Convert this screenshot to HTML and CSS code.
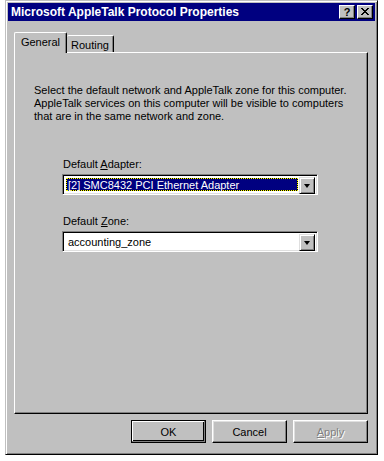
FILE: index.html
```html
<!DOCTYPE html>
<html>
<head>
<meta charset="utf-8">
<title>Microsoft AppleTalk Protocol Properties</title>
<link rel="stylesheet" href="styles.css">
</head>
<body>
<div class="window">
  <div class="titlebar">
    <span class="title">Microsoft AppleTalk Protocol Properties</span>
    <div class="tb-buttons">
      <div class="tb-btn help">?</div>
      <div class="tb-btn close">
        <svg width="8" height="7" viewBox="0 0 8 7"><path d="M0 0h2v1h1v1h2v-1h1v-1h2v1h-1v1h-1v1h-1v1h1v1h1v1h1v1h-2v-1h-1v-1h-2v1h-1v1h-2v-1h1v-1h1v-1h1v-1h-1v-1h-1v-1h-1z" fill="#000"/></svg>
      </div>
    </div>
  </div>
  <div class="body">
    <div class="tabs">
      <div class="tab active">General</div>
      <div class="tab">Routing</div>
    </div>
    <div class="panel">
      <p class="intro">Select the default network and AppleTalk zone for this computer.<br>AppleTalk services on this computer will be visible to computers<br>that are in the same network and zone.</p>
      <div class="field first">
        <div class="label">Default <u>A</u>dapter:</div>
        <div class="combo">
          <div class="value"><span class="sel">[2] SMC8432 PCI Ethernet Adapter</span></div>
          <div class="drop"><span class="arrow"></span></div>
        </div>
      </div>
      <div class="field">
        <div class="label">Default <u>Z</u>one:</div>
        <div class="combo">
          <div class="value"><span class="plain">accounting_zone</span></div>
          <div class="drop"><span class="arrow"></span></div>
        </div>
      </div>
    </div>
    <div class="buttons">
      <div class="btn default"><span>OK</span></div>
      <div class="btn"><span>Cancel</span></div>
      <div class="btn disabled"><span><u>A</u>pply</span></div>
    </div>
  </div>
</div>
</body>
</html>
```

FILE: styles.css
```css
html, body {
  margin: 0;
  padding: 0;
  background: #ffffff;
}
body {
  font-family: "Liberation Sans", Arial, sans-serif;
  font-size: 11px;
  color: #000;
}
.window {
  margin-left: 5px;
  width: 373px;
  height: 455px;
  box-sizing: border-box;
  background: #c0c0c0;
  border: 1px solid;
  border-color: #c0c0c0 #000 #000 #c0c0c0;
  box-shadow: inset 1px 1px #fff, inset -1px -1px #808080;
  padding: 2px;
}
.titlebar {
  height: 18px;
  background: #000080;
  display: flex;
  align-items: center;
  justify-content: space-between;
}
.title {
  color: #fff;
  font-weight: bold;
  font-size: 12px;
  padding-left: 3px;
  white-space: nowrap;
}
.tb-buttons {
  display: flex;
  gap: 2px;
  margin-right: 2px;
}
.tb-btn {
  width: 16px;
  height: 14px;
  box-sizing: border-box;
  background: #c0c0c0;
  border: 1px solid;
  border-color: #fff #000 #000 #fff;
  box-shadow: inset -1px -1px #808080;
  display: flex;
  align-items: center;
  justify-content: center;
  font-weight: bold;
  font-size: 11px;
  line-height: 12px;
  color: #000;
}
.tb-btn svg {
  display: block;
  margin-top: -1px;
}
.body {
  padding: 11px 0 0 6px;
}
.tabs {
  display: flex;
  align-items: flex-end;
  height: 21px;
  margin-bottom: -1px;
  position: relative;
  z-index: 1;
}
.tab {
  box-sizing: border-box;
  background: #c0c0c0;
  border-top: 1px solid #fff;
  border-left: 1px solid #fff;
  border-right: 1px solid #000;
  box-shadow: inset -1px 0 #808080;
  border-radius: 2px 2px 0 0;
  text-align: center;
}
.tab.active {
  width: 53px;
  height: 21px;
  padding-top: 3px;
}
.tab:not(.active) {
  width: 47px;
  height: 17px;
  margin-bottom: 1px;
  padding-top: 3px;
  border-left: none;
}
.panel {
  width: 354px;
  height: 362px;
  box-sizing: border-box;
  border: 1px solid;
  border-color: #fff #000 #000 #fff;
  box-shadow: inset -1px -1px #808080;
}
.intro {
  margin: 31px 0 0 19px;
  line-height: 13px;
  white-space: nowrap;
}
.field {
  margin-left: 47px;
}
.field.first {
  margin-top: 35px;
}
.field + .field {
  margin-top: 20px;
}
.label {
  padding-left: 1px;
  line-height: 13px;
  margin-bottom: 3px;
}
.combo {
  width: 256px;
  height: 21px;
  box-sizing: border-box;
  background: #fff;
  border: 1px solid;
  border-color: #808080 #fff #fff #808080;
  box-shadow: inset 1px 1px #000, inset -1px -1px #dfdfdf;
  padding: 2px;
  display: flex;
}
.value {
  flex: 1;
  display: flex;
  padding: 1px;
}
.sel {
  flex: 1;
  box-sizing: border-box;
  color: #fff;
  border: 1px dotted #ffff00;
  background: linear-gradient(#000080, #000080) padding-box, #000;
  padding-left: 1px;
  line-height: 13px;
}
.plain {
  padding-left: 2px;
  line-height: 15px;
}
.drop {
  width: 16px;
  height: 17px;
  box-sizing: border-box;
  background: #c0c0c0;
  border: 1px solid;
  border-color: #dfdfdf #000 #000 #dfdfdf;
  box-shadow: inset 1px 1px #fff, inset -1px -1px #808080;
  display: flex;
  align-items: center;
  justify-content: center;
}
.arrow {
  width: 0;
  height: 0;
  border-left: 3.5px solid transparent;
  border-right: 3.5px solid transparent;
  border-top: 4px solid #000;
}
.buttons {
  width: 354px;
  margin-top: 6px;
  display: flex;
  justify-content: flex-end;
  gap: 6px;
}
.btn {
  width: 75px;
  height: 23px;
  box-sizing: border-box;
  background: #c0c0c0;
  border: 1px solid;
  border-color: #fff #000 #000 #fff;
  box-shadow: inset -1px -1px #808080, inset 1px 1px #dfdfdf;
  display: flex;
  align-items: center;
  justify-content: center;
}
.btn.default {
  border: 1px solid #000;
  box-shadow: inset 1px 1px #fff, inset -2px -2px #000;
  position: relative;
}
.btn.default::after {
  content: "";
  position: absolute;
  inset: 0;
  border-right: 1px solid #808080;
  border-bottom: 1px solid #808080;
  box-sizing: border-box;
}
.btn.disabled span {
  color: #808080;
  text-shadow: 1px 1px #fff;
}
```
